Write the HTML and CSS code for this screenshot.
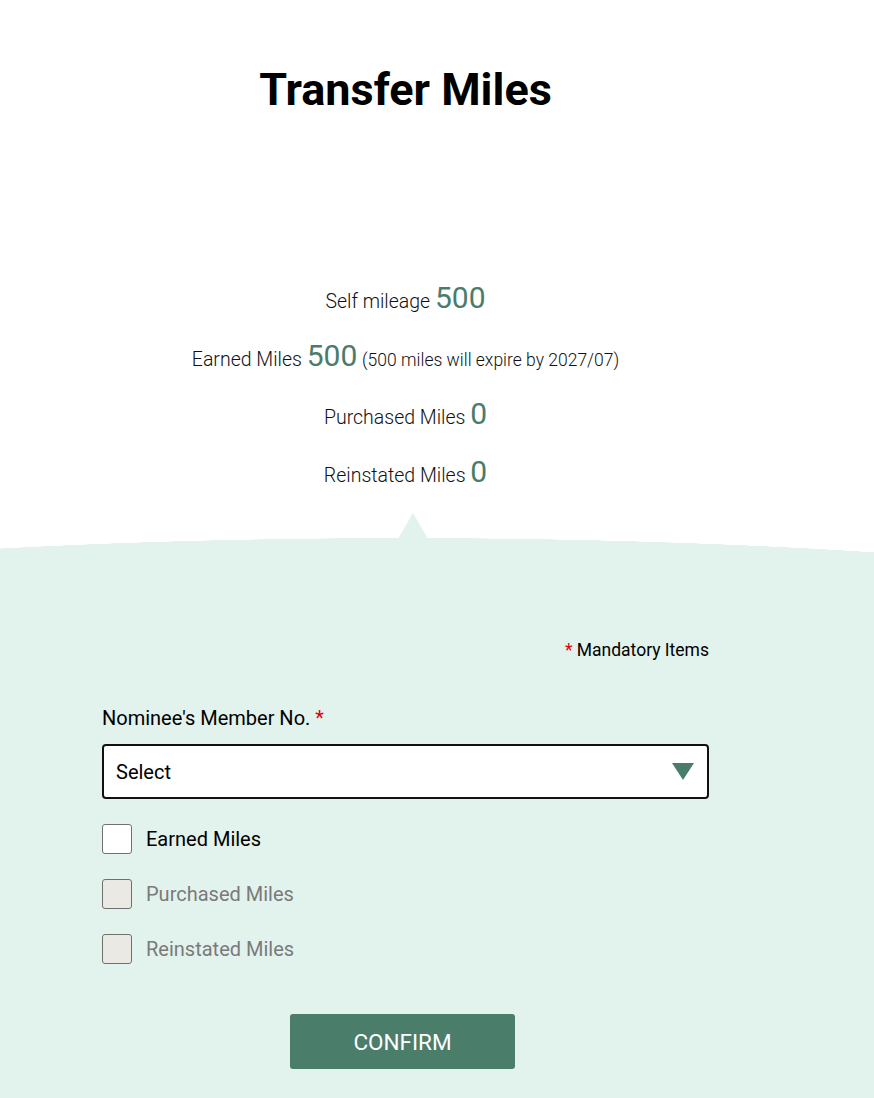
FILE: index.html
```html
<!DOCTYPE html>
<html lang="en">
<head>
<meta charset="utf-8">
<title>Transfer Miles</title>
<link rel="stylesheet" href="styles.css">
</head>
<body>
<main class="page">
  <h1 class="title">Transfer Miles</h1>
  <div class="stats">
    <p class="stat">Self mileage <span class="num">500</span></p>
    <p class="stat">Earned Miles <span class="num">500</span> <span class="note">(500 miles will expire by 2027/07)</span></p>
    <p class="stat">Purchased Miles <span class="num">0</span></p>
    <p class="stat">Reinstated Miles <span class="num">0</span></p>
  </div>
</main>
<section class="form-area">
  <div class="form-inner">
    <p class="mandatory"><span class="req">*</span> Mandatory Items</p>
    <p class="field-label">Nominee's Member No. <span class="req">*</span></p>
    <div class="select">
      <span>Select</span>
      <svg class="arrow" width="22" height="17" viewBox="0 0 22 17"><path d="M0 0 H22 L11 17 Z" fill="#4a7c6a"/></svg>
    </div>
    <div class="checks">
      <label class="check"><span class="box"></span><span>Earned Miles</span></label>
      <label class="check disabled"><span class="box"></span><span>Purchased Miles</span></label>
      <label class="check disabled"><span class="box"></span><span>Reinstated Miles</span></label>
    </div>
    <button class="confirm" type="button">CONFIRM</button>
  </div>
</section>
</body>
</html>
```

FILE: styles.css
```css
html, body {
  margin: 0;
  padding: 0;
  background: #ffffff;
  overflow-x: hidden;
}
body {
  font-family: Roboto, "Liberation Sans", sans-serif;
  color: #1d1d1d;
}
.page {
  width: 607px;
  margin-left: 102px;
  padding-top: 66px;
}
.title {
  margin: 0;
  font-size: 45px;
  line-height: 48px;
  font-weight: 700;
  text-align: center;
  color: #000;
}
.stats {
  margin-top: 159px;
  display: flex;
  flex-direction: column;
  align-items: center;
}
.stat {
  margin: 0;
  font-size: 19.5px;
  font-weight: 300;
  line-height: 58px;
  white-space: nowrap;
  color: #111;
}
.num {
  font-size: 30px;
  font-weight: 400;
  line-height: 1;
  color: #4a7c6a;
}
.note {
  font-size: 17.5px;
  font-weight: 300;
  line-height: 1;
}
.form-area {
  position: relative;
  margin-top: 33px;
  padding-bottom: 40px;
  background:
    radial-gradient(1000px 122px at 405px 122px, #e2f2ed 99.8%, rgba(226,242,237,0) 100%),
    linear-gradient(to bottom, rgba(226,242,237,0) 121px, #e2f2ed 121px);
}
.form-area::before {
  content: "";
  position: absolute;
  left: 398px;
  top: -25px;
  border-left: 15px solid transparent;
  border-right: 15px solid transparent;
  border-bottom: 26px solid #e2f2ed;
}
.form-inner {
  width: 607px;
  margin-left: 102px;
  padding-top: 100px;
  display: flex;
  flex-direction: column;
}
.mandatory {
  margin: 0;
  text-align: right;
  font-size: 17.5px;
  line-height: 24px;
  color: #000;
}
.req {
  color: #e00000;
}
.field-label {
  margin: 44px 0 0;
  font-size: 20px;
  line-height: 24px;
  color: #000;
}
.select {
  margin-top: 14px;
  box-sizing: border-box;
  height: 55px;
  border: 2px solid #111;
  border-radius: 4px;
  background: #fff;
  display: flex;
  align-items: center;
  justify-content: space-between;
  padding: 0 13px 0 12px;
  font-size: 20px;
  color: #000;
}
.arrow {
  display: block;
}
.checks {
  margin-top: 25px;
  display: flex;
  flex-direction: column;
  gap: 25px;
}
.check {
  display: flex;
  align-items: center;
  gap: 14px;
  height: 30px;
  font-size: 20px;
  color: #000;
}
.box {
  box-sizing: border-box;
  width: 30px;
  height: 30px;
  border: 1px solid #707070;
  border-radius: 3px;
  background: #fff;
}
.check.disabled {
  color: #7a7a7a;
}
.check.disabled .box {
  background: #ebe9e3;
}
.confirm {
  margin: 50px 0 0 188px;
  width: 225px;
  height: 55px;
  border: none;
  border-radius: 3px;
  background: #4a7d6a;
  color: #fff;
  font-family: Roboto, "Liberation Sans", sans-serif;
  font-size: 22.5px;
  padding: 0;
}
```
